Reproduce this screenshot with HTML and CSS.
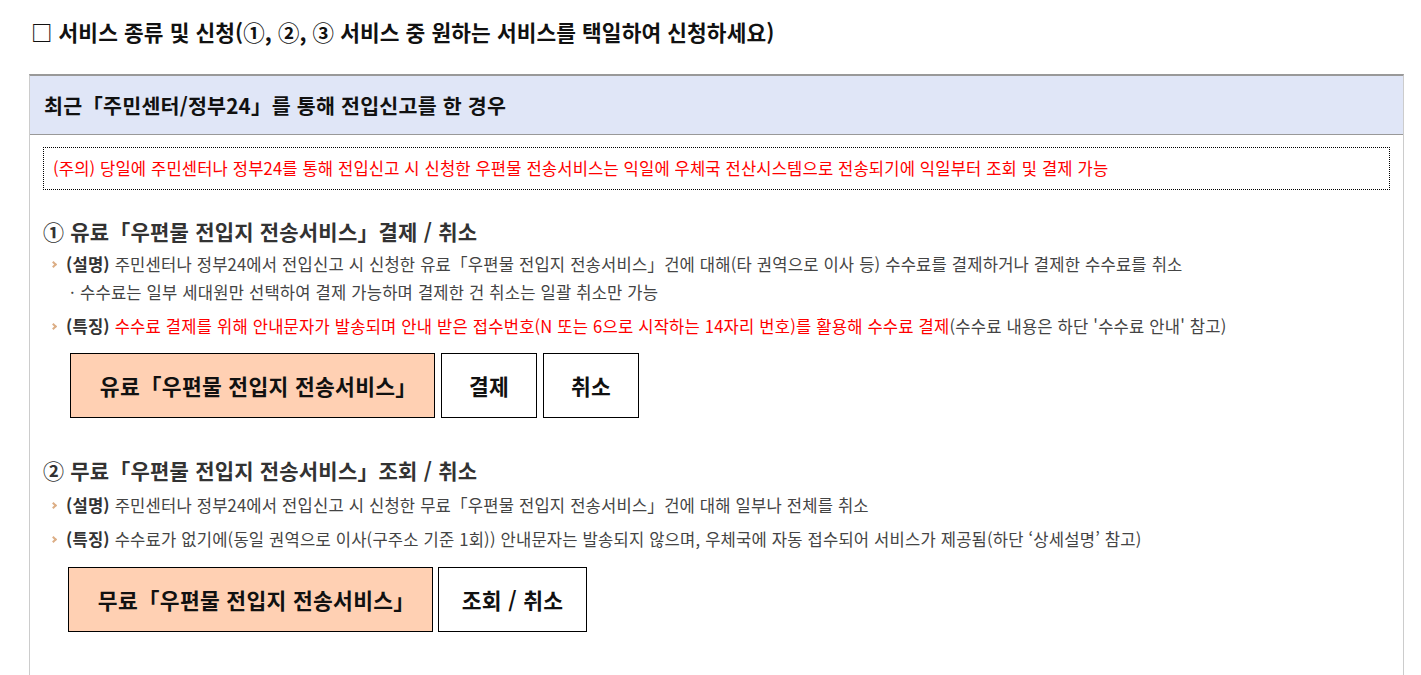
FILE: index.html
```html
<!DOCTYPE html>
<html lang="ko">
<head>
    <meta charset="UTF-8">
    <meta name="viewport" content="width=device-width, initial-scale=1.0">
    <title>서비스 종류 및 신청</title>
    <link rel="stylesheet" href="styles.css">
</head>
<body>

    <h2 class="tit_box">□ 서비스 종류 및 신청(①, ②, ③ 서비스 중 원하는 서비스를 택일하여 신청하세요)</h2>

    <div class="panel">
        <!-- 전입신고 경우 -->
        <h3 class="panel_head">최근「주민센터/정부24」를 통해 전입신고를 한 경우</h3>

        <div class="panel_body">
            <p class="notice">(주의) 당일에 주민센터나 정부24를 통해 전입신고 시 신청한 우편물 전송서비스는 익일에 우체국 전산시스템으로 전송되기에 익일부터 조회 및 결제 가능</p>

            <!-- ① 유료 -->
            <div class="svc">
                <h4 class="svc_tit">① 유료「우편물 전입지 전송서비스」결제 / 취소</h4>
                <ul class="desc">
                    <li>
                        <b>(설명)</b> 주민센터나 정부24에서 전입신고 시 신청한 유료「우편물 전입지 전송서비스」건에 대해(타 권역으로 이사 등) 수수료를 결제하거나 결제한 수수료를 취소
                        <span class="sub"><i class="dot">·</i>수수료는 일부 세대원만 선택하여 결제 가능하며 결제한 건 취소는 일괄 취소만 가능</span>
                    </li>
                    <li><b>(특징)</b> <span class="red">수수료 결제를 위해 안내문자가 발송되며 안내 받은 접수번호(N 또는 6으로 시작하는 14자리 번호)를 활용해 수수료 결제</span>(수수료 내용은 하단 '수수료 안내' 참고)</li>
                </ul>
                <div class="btns">
                    <span class="btn btn_main">유료「우편물 전입지 전송서비스」</span>
                    <button class="btn">결제</button>
                    <button class="btn">취소</button>
                </div>
            </div>

            <!-- ② 무료 -->
            <div class="svc svc2">
                <h4 class="svc_tit">② 무료「우편물 전입지 전송서비스」조회 / 취소</h4>
                <ul class="desc">
                    <li><b>(설명)</b> 주민센터나 정부24에서 전입신고 시 신청한 무료「우편물 전입지 전송서비스」건에 대해 일부나 전체를 취소</li>
                    <li><b>(특징)</b> 수수료가 없기에(동일 권역으로 이사(구주소 기준 1회)) 안내문자는 발송되지 않으며, 우체국에 자동 접수되어 서비스가 제공됨(하단 ‘상세설명’ 참고)</li>
                </ul>
                <div class="btns btns2">
                    <span class="btn btn_main">무료「우편물 전입지 전송서비스」</span>
                    <button class="btn btn_wide">조회 / 취소</button>
                </div>
            </div>
        </div>
    </div>

</body>
</html>
```

FILE: styles.css
```css
/* 공통 */
body {
    margin: 0;
    padding: 0 17px 0 29px;
    font-family: "Noto Sans CJK KR", "Noto Sans", sans-serif;
    color: #444;
    background: #fff;
}
h2, h3, h4, p, ul {
    margin: 0;
}
.tit_box {
    margin: 18px 0 0 2px;
    height: 56px;
    font-size: 21.4px;
    font-weight: bold;
    line-height: 28px;
    letter-spacing: 0.1px;
    color: #111;
}
.panel {
    border: 1px solid #ccc;
    border-top: 2px solid #999;
    border-bottom: none;
    height: 620px;
}
.panel_head {
    background-color: #e0e6f7;
    border-bottom: 1px solid #999;
    padding: 0 14px;
    height: 58px;
    line-height: 58px;
    font-size: 20.6px;
    font-weight: bold;
    letter-spacing: 0.2px;
    color: #111;
}
.panel_body {
    padding: 12px 13px 0 13px;
}
.notice {
    border: 1px dotted #000;
    padding: 0 9px;
    height: 41px;
    line-height: 40px;
    font-size: 16.6px;
    letter-spacing: 0.13px;
    color: #ff0000;
}
.svc {
    margin-top: 28px;
}
.svc2 {
    margin-top: 39px;
}
.svc_tit {
    font-size: 21px;
    font-weight: bold;
    line-height: 26px;
    letter-spacing: 0.2px;
    color: #333;
}
.desc {
    list-style: none;
    padding: 6px 0 0 0;
}
.svc2 .desc {
    padding-top: 8px;
}
.desc li {
    position: relative;
    padding-left: 23px;
    font-size: 16.6px;
    line-height: 28px;
    letter-spacing: 0.18px;
    margin-bottom: 6px;
}
/* 꺽쇠 아이콘 */
.desc li::before {
    content: "";
    position: absolute;
    left: 8px;
    top: 12px;
    width: 3px;
    height: 3px;
    border-top: 2px solid #dcae86;
    border-right: 2px solid #dcae86;
    transform: rotate(45deg);
}
.desc b {
    color: #333;
}
.desc .sub {
    display: block;
}
.dot {
    display: inline-block;
    width: 14px;
    padding-left: 4px;
    box-sizing: border-box;
    font-style: normal;
}
.red {
    color: #ff0000;
}
.btns {
    display: flex;
    gap: 6px;
    margin: 13px 0 0 27px;
}
.btns2 {
    margin: 14px 0 0 25px;
    gap: 5px;
}
.btn {
    display: flex;
    align-items: center;
    justify-content: center;
    height: 65px;
    width: 96px;
    box-sizing: border-box;
    border: 1px solid #000;
    background: #fff;
    font-family: inherit;
    font-size: 21.5px;
    font-weight: bold;
    letter-spacing: 0.3px;
    color: #111;
    padding: 0;
    cursor: pointer;
}
.btn_main {
    width: 365px;
    padding-left: 12px;
    background-color: #ffd0b3;
}
.btn_wide {
    width: 149px;
}
```
